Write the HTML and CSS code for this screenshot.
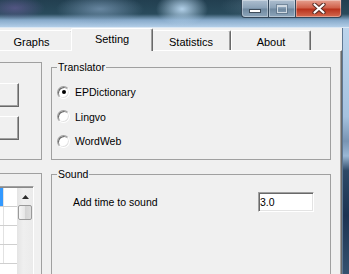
FILE: index.html
```html
<!DOCTYPE html>
<html lang="en">
<head>
  <meta charset="UTF-8">
  <title>Setting</title>
  <link rel="stylesheet" href="styles.css">
</head>
<body>
  <div class="window">
    <div class="titlebar">
      <div class="caption-buttons">
        <span class="cap-btn cap-min"><span class="glyph-min"></span></span>
        <span class="cap-btn cap-max"><span class="glyph-max"></span></span>
        <span class="cap-btn cap-close">
          <svg width="14" height="11" viewBox="0 0 14 11">
            <path d="M2.5 1.5 L11.5 9.5 M11.5 1.5 L2.5 9.5" stroke="#5a2c24" stroke-width="4.2" stroke-linecap="round"/>
            <path d="M2.5 1.5 L11.5 9.5 M11.5 1.5 L2.5 9.5" stroke="#fff" stroke-width="2.2" stroke-linecap="round"/>
          </svg>
        </span>
      </div>
    </div>

    <div class="frame">
      <div class="client">
        <div class="tabs">
          <div class="tab tab-graphs">Graphs</div>
          <div class="tab tab-setting active">Setting</div>
          <div class="tab tab-stats">Statistics</div>
          <div class="tab tab-about">About</div>
        </div>

        <div class="tab-panel">
          <div class="col col-left">
            <fieldset class="group group-buttons">
              <div class="button-stack">
                <button class="btn"></button>
                <button class="btn"></button>
              </div>
            </fieldset>
            <fieldset class="group group-list">
              <div class="listbox">
                <div class="list-rows">
                  <div class="list-row"><span class="cell-main selected"></span><span class="cell-sub"></span></div>
                  <div class="list-row"><span class="cell-main"></span><span class="cell-sub"></span></div>
                  <div class="list-row"><span class="cell-main"></span><span class="cell-sub"></span></div>
                  <div class="list-row"><span class="cell-main"></span><span class="cell-sub"></span></div>
                </div>
                <div class="scrollbar">
                  <div class="scroll-up">
                    <svg width="7" height="4" viewBox="0 0 7 4"><polygon points="3.5,0 7,4 0,4" fill="#2b2b2b"/></svg>
                  </div>
                  <div class="scroll-thumb"></div>
                </div>
              </div>
            </fieldset>
          </div>

          <div class="col col-right">
            <fieldset class="group group-translator">
              <legend>Translator</legend>
              <label class="radio-row"><span class="radio checked"></span>EPDictionary</label>
              <label class="radio-row"><span class="radio"></span>Lingvo</label>
              <label class="radio-row"><span class="radio"></span>WordWeb</label>
            </fieldset>
            <fieldset class="group group-sound">
              <legend>Sound</legend>
              <div class="field-row">
                <span>Add time to sound</span>
                <input class="textbox" type="text" value="3.0">
              </div>
            </fieldset>
          </div>
        </div>
      </div>
      <div class="frame-edge"></div>
    </div>
  </div>
</body>
</html>
```

FILE: styles.css
```css
body {
  margin: 0;
  width: 349px;
  height: 274px;
  overflow: hidden;
  font-family: "Liberation Sans", Arial, sans-serif;
  font-size: 11px;
  color: #000;
  background: #f0f0f0;
}
.window {
  width: 409px;
  margin-left: -60px;
}

/* glass caption */
.titlebar {
  height: 28px;
  box-sizing: border-box;
  border-bottom: 1px solid #dbe7f3;
  display: flex;
  justify-content: flex-end;
  padding-right: 7px;
  background:
    radial-gradient(30px 12px at 75px 8px, rgba(112, 96, 160, 0.6), transparent),
    radial-gradient(44px 15px at 160px 9px, rgba(130, 160, 190, 0.7), transparent),
    radial-gradient(26px 17px at 242px 9px, rgba(185, 215, 240, 0.95), transparent),
    radial-gradient(50px 14px at 330px 6px, rgba(110, 140, 160, 0.5), transparent),
    linear-gradient(to bottom, #223f50 0%, #294b5c 52%, #86a9c9 74%, #b3cee8 100%);
}
.caption-buttons {
  display: flex;
  height: 18px;
}
.cap-btn {
  box-sizing: border-box;
  height: 18px;
  display: flex;
  align-items: center;
  justify-content: center;
  border: 1px solid #34475a;
  border-top: none;
  box-shadow: inset 0 0 0 1px rgba(255, 255, 255, 0.35);
}
.cap-min {
  width: 27px;
  border-right: none;
  border-radius: 0 0 0 4px;
  background: linear-gradient(to bottom, #aebfd0, #8aa1b7 48%, #6f889f 52%, #8da5bb);
  align-items: flex-end;
  padding-bottom: 4px;
}
.cap-max {
  width: 27px;
  border-right: none;
  background: linear-gradient(to bottom, #aebfd0, #8aa1b7 48%, #6f889f 52%, #8da5bb);
}
.cap-close {
  width: 47px;
  border-radius: 0 0 4px 0;
  background: linear-gradient(to bottom, #e6a090, #d0604a 46%, #b9321c 54%, #d46b50);
}
.glyph-min {
  width: 10px;
  height: 2px;
  background: #fff;
  border: 1px solid #3e4c5a;
}
.glyph-max {
  width: 8px;
  height: 5px;
  border: 1px solid #cfd9e2;
  border-top-width: 2px;
  box-shadow: 0 0 0 1px rgba(70, 90, 110, 0.45);
}

.frame {
  display: flex;
  height: 246px;
}
.client {
  width: 402px;
  display: flex;
  flex-direction: column;
  background: #f0f0f0;
}
.frame-edge {
  width: 7px;
  border-left: 1px solid #5f7893;
  box-sizing: border-box;
  background: linear-gradient(to bottom, #bcd4ec 0%, #a5c2df 36%, #7894b3 46%, #9bb8d5 52%, #2d4967 58%, #1c3352 76%, #34516f 100%);
}

/* tabs */
.tabs {
  display: flex;
  align-items: flex-end;
  height: 22px;
  padding-left: 50px;
}
.tab {
  box-sizing: border-box;
  height: 20px;
  display: flex;
  align-items: center;
  justify-content: center;
  padding-top: 2px;
  background: #f0f0f0;
  border-top: 1px solid #fff;
  border-left: 1px solid #fff;
  border-right: 1px solid #696969;
  border-radius: 2px 2px 0 0;
  box-shadow: inset -1px 0 #a0a0a0;
}
.tab-graphs { width: 83px; }
.tab-stats { width: 80px; }
.tab-about { width: 80px; }
.tab.active {
  width: 82px;
  height: 23px;
  margin: 0 -2px -1px;
  padding-top: 0;
  padding-bottom: 2px;
  position: relative;
  z-index: 1;
}

.tab-panel {
  flex: 1;
  overflow: hidden;
  display: grid;
  grid-template-columns: 96px 1fr;
  column-gap: 9px;
  align-items: start;
  padding: 10px 10px 0 5px;
  border-top: 1px solid #fff;
  border-left: 1px solid #fff;
  border-right: 1px solid #696969;
  box-shadow: inset -1px 0 #a0a0a0;
  font-size: 10.5px;
}
.col {
  display: flex;
  flex-direction: column;
}
.col-left {
  margin-top: 1px;
}

/* group boxes */
.group {
  margin: 0;
  padding: 0;
  min-width: 0;
  box-sizing: border-box;
  border: 1px solid #a0a0a0;
}
.group legend {
  padding: 0 1px;
  line-height: 12px;
}
.group-buttons {
  height: 98px;
  padding: 20px 22px 0 0;
}
.button-stack {
  display: flex;
  flex-direction: column;
  align-items: flex-end;
  gap: 9px;
}
.btn {
  width: 90px;
  height: 24px;
  padding: 0;
  background: #f0f0f0;
  border: 1px solid;
  border-color: #fff #696969 #696969 #fff;
  box-shadow: inset -1px -1px #a0a0a0;
}
.group-list {
  height: 110px;
  margin-top: 13px;
  padding: 12px 7px 0 0;
}
.listbox {
  display: flex;
  height: 96px;
  padding: 1px 0 0 1px;
  background: #8a8a8a;
  border: 1px solid;
  border-color: #a0a0a0 #fff #fff #a0a0a0;
}
.list-rows {
  flex: 1;
  background: #fff;
}
.list-row {
  display: flex;
  height: 18px;
  border-bottom: 1px solid #cfcfcf;
}
.cell-main {
  flex: 1;
}
.cell-main.selected {
  background: #3399ff;
}
.cell-sub {
  width: 13px;
  border-left: 1px solid #e2e2e2;
}
.scrollbar {
  width: 16px;
  background: linear-gradient(to right, #e4e4e4, #efefef 40%, #ebebeb);
}
.scroll-up {
  height: 17px;
  display: flex;
  align-items: center;
  justify-content: center;
}
.scroll-thumb {
  height: 15px;
  margin: 0 1px;
  box-sizing: border-box;
  border: 1px solid #9a9a9a;
  border-radius: 2px;
  background: linear-gradient(to right, #f6f6f6, #e6e6e6 50%, #d4d4d4 51%, #dedede);
}

.group-translator {
  height: 99px;
  padding: 7px 0 0 5px;
}
.radio-row {
  display: flex;
  align-items: center;
  gap: 5px;
  height: 24.5px;
}
.radio {
  width: 13px;
  height: 13px;
  box-sizing: border-box;
  border-radius: 50%;
  border: 1px solid;
  border-color: #a0a0a0 #fff #fff #a0a0a0;
  box-shadow: inset 1px 1px #696969, inset -1px -1px #e3e3e3;
  background: #fff;
  display: flex;
  align-items: center;
  justify-content: center;
}
.radio.checked::after {
  content: "";
  width: 4px;
  height: 4px;
  border-radius: 50%;
  background: #000;
}
.group-sound {
  height: 120px;
  margin-top: 8px;
  padding: 12px 16px 0 21px;
}
.group-sound legend {
  margin-left: -16px;
}
.field-row {
  display: flex;
  align-items: center;
  justify-content: space-between;
}
.textbox {
  width: 56px;
  height: 20px;
  box-sizing: border-box;
  padding: 0 1px;
  font: inherit;
  background: #fff;
  border: 1px solid;
  border-color: #a0a0a0 #fff #fff #a0a0a0;
  box-shadow: inset 1px 1px #696969, inset -1px -1px #e3e3e3;
  outline: none;
}
```
